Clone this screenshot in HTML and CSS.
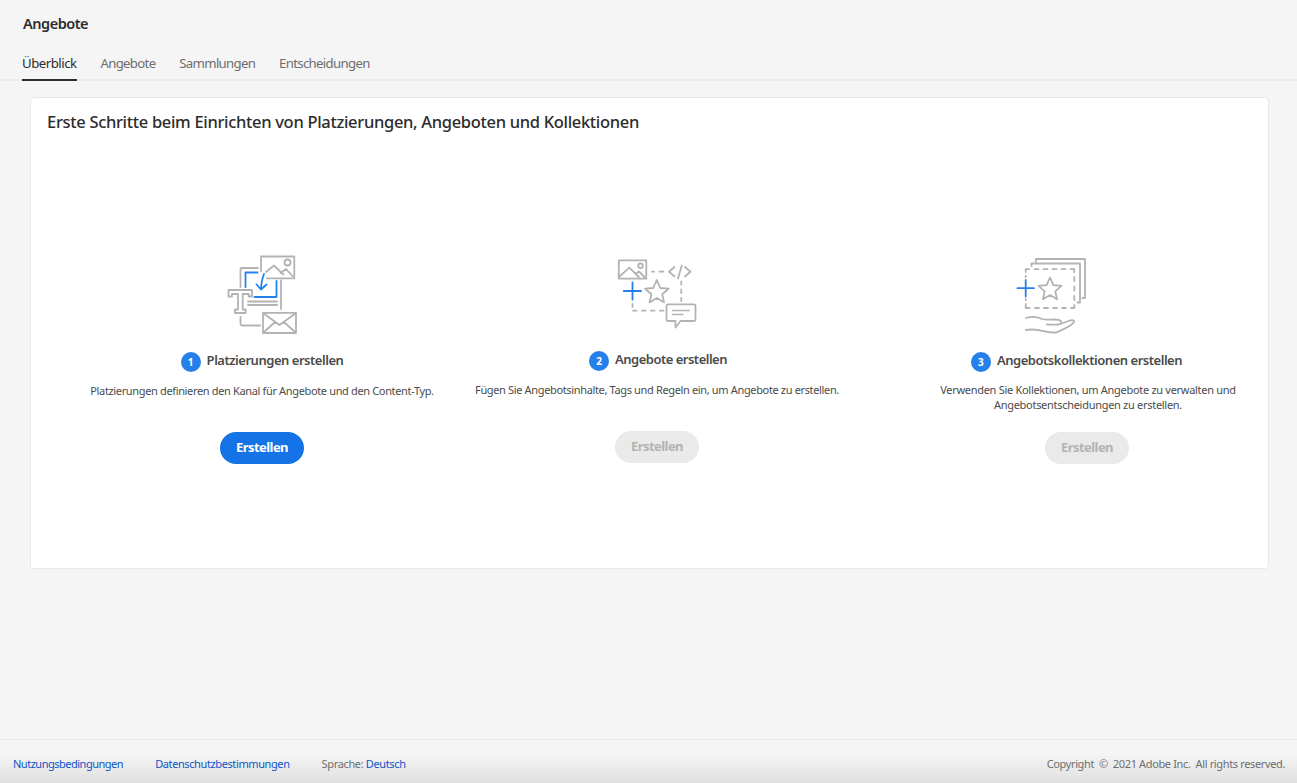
FILE: index.html
```html
<!DOCTYPE html>
<html lang="de">
<head>
<meta charset="utf-8">
<title>Angebote</title>
<link rel="stylesheet" href="styles.css">
</head>
<body>
<header class="header">
  <h1 class="page-title">Angebote</h1>
  <nav class="tabs">
    <a class="tab tab-active">Überblick</a>
    <a class="tab">Angebote</a>
    <a class="tab">Sammlungen</a>
    <a class="tab">Entscheidungen</a>
  </nav>
</header>
<main class="card">
  <h2 class="card-title">Erste Schritte beim Einrichten von Platzierungen, Angeboten und Kollektionen</h2>
  <div class="steps">
    <section class="step step-one">
      <svg class="art" width="90" height="100" viewBox="0 0 90 100">
        <g class="gray">
          <path d="M41 23H25q-1.500 0-1.500 1.500V42M23.500 72v7q0 1.500 1.500 1.500H43M64 35.500V64M31 56.500H60M31 60H60"/>
          <path d="M44 26.500V11.500h33.300v21.800H50M49 27l8-6.500 9.500 9M63.500 28l5.500-4 6.500 7"/>
          <circle cx="70.500" cy="17.500" r="3"/>
          <path d="M11.500 45h23.500v6.500h-3.300v-2.500h-6V64.500h3v3.500H18v-3.500h3V49h-6v2.500h-3.500z"/>
          <path d="M46 67.800h33V88H46zM46 68l16.500 12L79 68M46.500 87.500 58 77M78.500 87.500 67 77"/>
        </g>
        <path class="blue" d="M40.500 27.500H28.500V42M37.500 52H59.500V36M47 29Q44.500 35 44 44M39.500 39.500 44 44.500 49.500 39.500"/>
      </svg>
      <h3 class="step-title"><i class="badge">1</i>Platzierungen erstellen</h3>
      <p class="step-text">Platzierungen definieren den Kanal für Angebote und den Content-Typ.</p>
      <button class="button button-primary">Erstellen</button>
    </section>
    <section class="step step-two">
      <svg class="art" width="100" height="100" viewBox="0 0 100 100">
        <g class="gray">
          <path d="M11.800 15.300h27.500v18.300H11.800zM12.500 31.500l9.800-8.800 9.500 9.300M28.500 29l3.500-2.500L37.500 32"/>
          <circle cx="33.500" cy="20.800" r="2.300"/>
          <path d="M45 26.700h2M52.500 26.700h4M67.500 22l-5.500 4.800 5.500 4.700M78 22l5.500 4.800-5.500 4.700M74.800 20.500 71 33.500M74.300 36.500v3M74.300 44.500v3.500M74.300 53v3M25.500 59v3M26 65.700h3.500M35 65.700h3.500M44 65.700h3.500M53 65.700h3.500"/>
          <path d="M49.800 35l3.500 8 8.200.7-6.300 5.500 1.900 8.200-7.300-4.400-7.300 4.400 1.900-8.200-6.300-5.500 8.200-.7z"/>
          <path d="M61 59.300H87q1.500 0 1.500 1.500V74.500q0 1.500-1.500 1.500H73.500L68.500 82.500V76H61q-1.500 0-1.500-1.500V60.800q0-1.500 1.500-1.500z"/>
          <path class="thin" d="M65.500 65.500H82.500M65.500 69.500H76"/>
        </g>
        <path class="blue" d="M25.500 37.500V54.500M16.800 46H34"/>
      </svg>
      <h3 class="step-title"><i class="badge">2</i>Angebote erstellen</h3>
      <p class="step-text">Fügen Sie Angebotsinhalte, Tags und Regeln ein, um Angebote zu erstellen.</p>
      <button class="button" disabled>Erstellen</button>
    </section>
    <section class="step step-three">
      <svg class="art" width="90" height="100" viewBox="0 0 90 100">
        <g class="gray">
          <path d="M29 16.500v-2.500H78V53h-2.500M24.500 21v-2.500H73V57.500h-2.500"/>
          <path d="M18.700 27v-2.800h3.500M27.500 24.200h4M36.500 24.200h4M45.500 24.200h4M54.500 24.200h4M63.500 24.200h3.800v3M67.300 32v4M67.300 41.500v4M67.300 51v4M67.300 60v3H64M59 63h-4M50 63h-4M41 63h-4M32 63h-4M22.700 63h-4v-4M18.700 31v1M18.700 54v1"/>
          <path d="M43 32.500l3.400 7.700 8 .7-6.100 5.400 1.800 8-7.100-4.200-7.100 4.200 1.800-8-6.100-5.400 8-.7z"/>
          <path d="M19 73C25 71 30 71.500 35 74 42 76 52 72.500 54 76.500 55.500 80 50 80 40 79.500M54.500 78.500 63 75.500Q67.500 74.500 67 77C64 81.500 56 84.500 49 87.500 38 88.500 33 82.500 19 85"/>
        </g>
        <path class="blue" d="M18.700 35V51.500M10.500 43.200H27"/>
      </svg>
      <h3 class="step-title"><i class="badge">3</i>Angebotskollektionen erstellen</h3>
      <p class="step-text">Verwenden Sie Kollektionen, um Angebote zu verwalten und<br>Angebotsentscheidungen zu erstellen.</p>
      <button class="button" disabled>Erstellen</button>
    </section>
  </div>
</main>
<footer class="footer">
  <a class="footer-link terms">Nutzungsbedingungen</a>
  <a class="footer-link privacy">Datenschutzbestimmungen</a>
  <span>Sprache: <a class="footer-link">Deutsch</a></span>
  <span class="copyright">Copyright &nbsp;© &nbsp;2021 Adobe Inc. &nbsp;All rights reserved.</span>
</footer>
</body>
</html>
```
FILE: styles.css
```css
* { box-sizing: border-box; }
body { margin: 0; height: 783px; display: flex; flex-direction: column; background: #f5f5f5; color: #2c2c2c; font-family: "Noto Sans", sans-serif; overflow: hidden; }
h1, h2, h3, p { margin: 0; }
.header { height: 81px; border-bottom: 2px solid #eaeaea; padding-left: 22px; }
.page-title { height: 48px; padding-left: 1px; font-size: 14.500px; line-height: 47px; font-weight: 600; letter-spacing: -0.48px; }
.tabs { display: flex; gap: 23.800px; height: 33px; }
.tab { font-size: 13.200px; line-height: 31px; color: #6e6e6e; height: 33px; letter-spacing: -0.67px; }
.tab-active { color: #2c2c2c; border-bottom: 2px solid #2c2c2c; letter-spacing: -0.48px; }
.card { width: 1239px; height: 472px; margin: 16px 0 0 30px; background: #fff; border: 1px solid #e8e8e8; border-radius: 4px; }
.card-title { height: 147px; padding-left: 16px; font-size: 16.500px; line-height: 47px; font-weight: 500; letter-spacing: -0.315px; }
.steps { display: grid; grid-template-columns: 400px 390px 416px; margin-left: 31px; }
.step { display: flex; flex-direction: column; align-items: center; white-space: nowrap; }
.step-three { margin-left: 54px; }
.art { display: block; }
.gray, .blue { fill: none; stroke: #b3b3b3; stroke-width: 1.8; stroke-linecap: round; stroke-linejoin: round; }
.blue { stroke: #2680eb; }
.thin { stroke-width: 1.3; }
.step-title { display: flex; gap: 6px; height: 32px; margin-top: 6px; font-size: 13px; line-height: 18px; font-weight: 600; letter-spacing: -0.47px; color: #4b4b4b; }
.badge { width: 20px; height: 20px; margin-top: 1px; border-radius: 50%; background: #2680eb; color: #fff; font-size: 10px; line-height: 20px; font-style: normal; font-weight: 700; letter-spacing: 0; text-align: center; }
.step-text { height: 49px; font-size: 11px; line-height: 15px; letter-spacing: -0.35px; color: #4b4b4b; text-align: center; }
.step-two .art { margin-bottom: -1px; }
.step-two .step-title { padding-left: 2px; letter-spacing: -0.5px; }
.step-three .art { margin-right: 70px; }
.step-three .step-title { height: 31px; margin-right: 21px; }
.step-three .step-text { height: 50px; padding-left: 2px; letter-spacing: -0.29px; }
.button { width: 84px; height: 32px; border: 0; border-radius: 16px; padding: 0 0 2px; background: #eaeaea; color: #b3b3b3; font: 700 13px/30px "Noto Sans", sans-serif; letter-spacing: -0.55px; }
.button-primary { background: #1473e6; color: #fff; }
.footer { height: 44px; margin-top: auto; padding: 4px 12px 0 13px; display: flex; align-items: center; gap: 32px; border-top: 1px solid #e8e8e8; background: linear-gradient(#f5f5f5 30%, #e0e0e0); font-size: 11px; letter-spacing: -0.36px; color: #6e6e6e; }
.footer-link { color: #0d55c8; }
.terms { letter-spacing: -0.49px; }
.privacy { letter-spacing: -0.39px; }
.copyright { margin-left: auto; }
```
